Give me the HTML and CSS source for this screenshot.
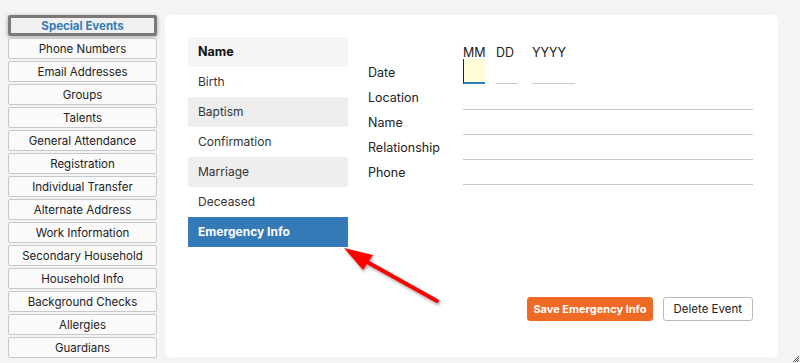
FILE: index.html
```html
<!DOCTYPE html>
<html lang="en">

<head>
  <meta charset="UTF-8" />
  <title>Special Events</title>
  <link rel="stylesheet" href="styles.css">
</head>

<body>
  <div class="page">
    <nav class="sidebar">
      <button class="side-btn active">Special Events</button>
      <button class="side-btn">Phone Numbers</button>
      <button class="side-btn">Email Addresses</button>
      <button class="side-btn">Groups</button>
      <button class="side-btn">Talents</button>
      <button class="side-btn">General Attendance</button>
      <button class="side-btn">Registration</button>
      <button class="side-btn">Individual Transfer</button>
      <button class="side-btn">Alternate Address</button>
      <button class="side-btn">Work Information</button>
      <button class="side-btn">Secondary Household</button>
      <button class="side-btn">Household Info</button>
      <button class="side-btn">Background Checks</button>
      <button class="side-btn">Allergies</button>
      <button class="side-btn">Guardians</button>
    </nav>

    <div class="card">
      <ul class="event-list">
        <li class="head">Name</li>
        <li>Birth</li>
        <li class="alt">Baptism</li>
        <li>Confirmation</li>
        <li class="alt">Marriage</li>
        <li>Deceased</li>
        <li class="selected">Emergency Info</li>
      </ul>

      <form class="event-form">
        <div class="fields">
          <span></span>
          <div class="date-head">
            <span class="mm">MM</span>
            <span class="dd">DD</span>
            <span class="yy">YYYY</span>
          </div>

          <label>Date</label>
          <div class="date-inputs">
            <input class="mm focus" type="text" />
            <input class="dd" type="text" />
            <input class="yy" type="text" />
          </div>

          <label>Location</label>
          <input class="line" type="text" />

          <label>Name</label>
          <input class="line" type="text" />

          <label>Relationship</label>
          <input class="line" type="text" />

          <label>Phone</label>
          <input class="line" type="text" />
        </div>

        <div class="actions">
          <button type="button" class="btn-save">Save Emergency Info</button>
          <button type="button" class="btn-delete">Delete Event</button>
        </div>
      </form>
    </div>

    <svg class="arrow" width="120" height="80" viewBox="0 0 120 80">
      <defs>
        <filter id="shade" x="-20%" y="-20%" width="140%" height="140%">
          <feDropShadow dx="1" dy="2" stdDeviation="1.5" flood-color="#000" flood-opacity="0.35" />
        </filter>
      </defs>
      <g filter="url(#shade)">
        <line x1="107" y1="71" x2="30" y2="28" stroke="#f00" stroke-width="4" stroke-linecap="round" />
        <polygon points="14,18 43,25 33,40" fill="#f00" />
      </g>
    </svg>

    <svg class="grip" width="10" height="10" viewBox="0 0 10 10">
      <path d="M9 3 L3 9 M9 5 L5 9 M9 7 L7 9" stroke="#555" stroke-width="1" />
    </svg>
  </div>
</body>

</html>
```

FILE: styles.css
```css
* {
  box-sizing: border-box;
  margin: 0;
  padding: 0;
}

body {
  background: #f4f4f4;
  color: #222;
  font-family: Inter, 'Noto Sans', sans-serif;
  width: 800px;
  height: 363px;
  overflow: hidden;
}

.page {
  position: relative;
  display: flex;
  gap: 8px;
  padding: 15px 0 0 8px;
  height: 100%;
}

.sidebar {
  display: flex;
  flex-direction: column;
  gap: 2px;
  width: 149px;
}

.side-btn {
  height: 21px;
  background: #fafafa;
  border: 1px solid #c8c8c8;
  border-radius: 2px;
  font-family: inherit;
  font-size: 11.5px;
  color: #222;
}

.side-btn.active {
  border: 3px solid #7a7a7a;
  color: #337ab7;
  font-weight: bold;
  background: #f0f0f0;
  box-shadow: 0 1px 4px rgba(0, 0, 0, 0.35);
}

.card {
  display: flex;
  gap: 20px;
  width: 613px;
  height: 342px;
  background: #fff;
  border-radius: 6px;
  padding: 22px 25px 36px 23px;
}

.event-list {
  list-style: none;
  width: 160px;
  align-self: flex-start;
  font-size: 12px;
  color: #333;
}

.event-list li {
  height: 30px;
  line-height: 30px;
  padding-left: 10px;
}

.event-list .head {
  background: #f5f5f5;
  font-weight: bold;
  font-size: 12.5px;
  color: #111;
}

.event-list .alt {
  background: #eeeeee;
}

.event-list .selected {
  background: #337ab7;
  color: #fff;
  font-weight: bold;
}

.event-form {
  flex: 1;
  display: flex;
  flex-direction: column;
}

.fields {
  display: grid;
  grid-template-columns: 95px 290px;
  grid-auto-rows: 25px;
  grid-template-rows: 22px 25px;
  align-items: center;
  font-size: 12.5px;
}

.fields label {
  color: #222;
  padding-top: 2px;
}

.date-head {
  display: flex;
  align-items: center;
  align-self: end;
  color: #222;
  height: 15px;
  margin-bottom: -1px;
}

.date-head span,
.date-inputs input {
  flex: none;
}

.mm {
  width: 22px;
  margin-right: 11px;
}

.dd {
  width: 22px;
  margin-right: 14px;
}

.yy {
  width: 43px;
}

.date-inputs {
  display: flex;
  align-items: flex-end;
  height: 25px;
}

.date-inputs input {
  height: 24px;
  border: none;
  border-bottom: 1px solid #c8c8c8;
  background: transparent;
  outline: none;
}

.date-inputs input.focus {
  background: #fffdd8;
  border-bottom: 2px solid #337ab7;
  border-left: 1px solid #222;
  height: 25px;
}

.line {
  height: 25px;
  border: none;
  border-bottom: 1px solid #c8c8c8;
  outline: none;
  align-self: end;
  margin-bottom: -1px;
}

.actions {
  margin-top: auto;
  display: flex;
  justify-content: flex-end;
  gap: 10px;
}

.actions button {
  height: 24px;
  font-family: inherit;
  border-radius: 3px;
}

.btn-save {
  background: #ef6b25;
  color: #fff;
  font-weight: bold;
  font-size: 11px;
  padding: 0 5px;
  border: 1px solid #ef6b25;
}

.btn-delete {
  background: #fff;
  color: #222;
  font-size: 11.5px;
  padding: 0 10px;
  border: 1px solid #bbb;
}

.arrow {
  position: absolute;
  left: 330px;
  top: 230px;
}

.grip {
  position: absolute;
  right: 0;
  bottom: 0;
}
```
